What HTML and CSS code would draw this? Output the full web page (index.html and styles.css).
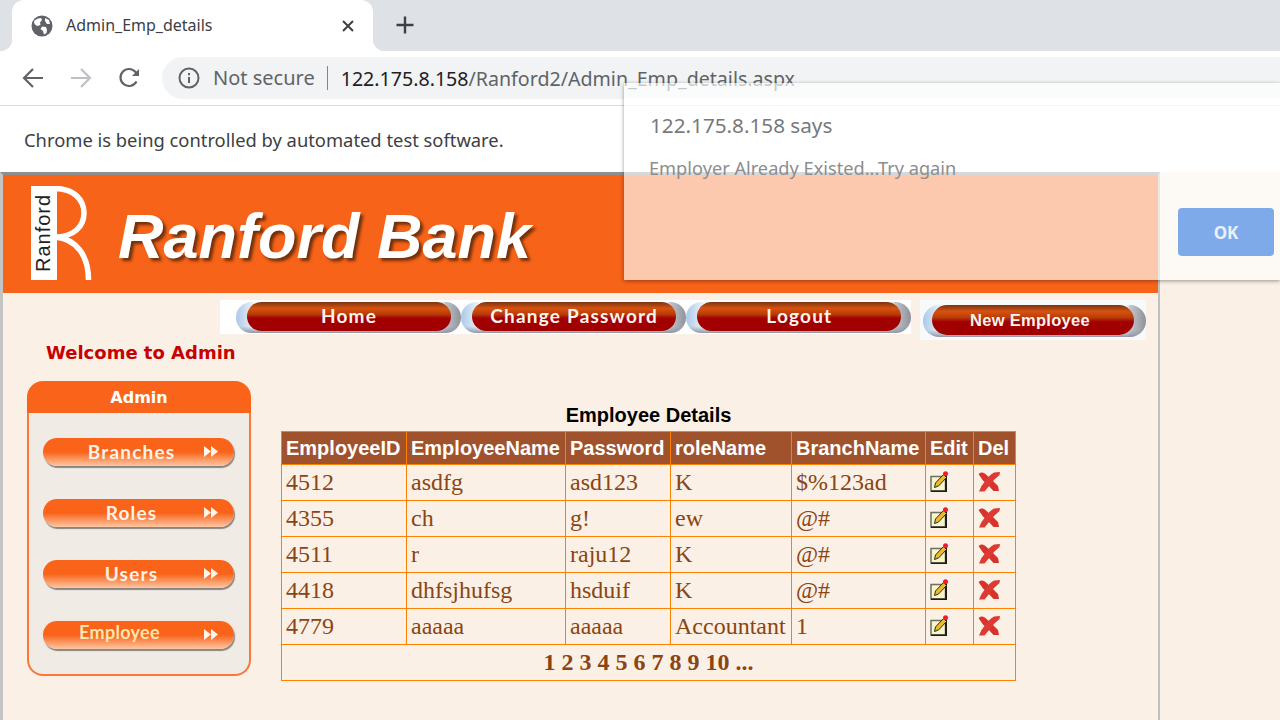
FILE: index.html
```html
<!DOCTYPE html>
<html lang="en">
<head>
    <meta charset="UTF-8">
    <title>Admin_Emp_details</title>
    <link rel="stylesheet" href="styles.css">
</head>
<body>
    <svg class="defs" width="0" height="0">
        <symbol id="edit" viewBox="0 0 18 21">
            <rect x="1" y="5.500" width="14.500" height="14.500" fill="#f8f6c4" stroke="#6d6d64" stroke-width="1.500"/>
            <path d="M16 5V20.500H1" fill="none" stroke="#1d1d1d" stroke-width="2"/>
            <path d="M4.500 16.500L5.500 12L13.500 3.500L16.500 6.500L8.500 15Z" fill="#f0b92a" stroke="#2a2a22" stroke-width="1"/>
            <circle cx="15.500" cy="2.800" r="2.500" fill="#ee1c2e"/>
        </symbol>
        <symbol id="del" viewBox="0 0 22 21">
            <path d="M0.500 3C3 0.500 6 1 8.500 4L13 8L20 15L21 20L15.500 20L10 14L5 9.500Z" fill="#d8322a"/>
            <path d="M22 1L16 1.500C13 3 10 6 8 9L3.500 15L1 20.500L6.500 20.500L11.500 14.500L16 9L21.500 4Z" fill="#dc3a32"/>
        </symbol>
        <symbol id="arrows" viewBox="0 0 14 11">
            <path d="M0 0L7 5.500L0 11ZM7 0L14 5.500L7 11Z" fill="#fff6ea"/>
        </symbol>
    </svg>

    <div class="tabstrip">
        <div class="tab">
            <svg class="globe" width="22" height="22" viewBox="0 0 22 22">
                <circle cx="11" cy="11" r="10.500" fill="#5f6368"/>
                <path d="M3 6C5 4 8 3 10 3L11 5L9 7.500L9.500 10L6 11L3.500 9ZM13 19.500L12 16L9.500 14L11 11.500L15 12L16 15L15.500 18ZM14 3L18 5L19 9L16 9L14 6Z" fill="#fff"/>
            </svg>
            <span class="tab-title">Admin_Emp_details</span>
            <svg class="tab-close" width="14" height="14" viewBox="0 0 14 14">
                <path d="M2 2L12 12M12 2L2 12" stroke="#3c4043" stroke-width="2"/>
            </svg>
        </div>
        <svg class="new-tab" width="20" height="20" viewBox="0 0 20 20">
            <path d="M10 1.500V18.500M1.500 10H18.500" stroke="#3c4043" stroke-width="2.400"/>
        </svg>
    </div>

    <div class="toolbar">
        <svg class="tool" width="24" height="24" viewBox="0 0 24 24">
            <path d="M22 12H4M12 3L3 12L12 21" fill="none" stroke="#5f6368" stroke-width="2.200"/>
        </svg>
        <svg class="tool" width="24" height="24" viewBox="0 0 24 24">
            <path d="M2 12H20M12 3L21 12L12 21" fill="none" stroke="#bdc1c6" stroke-width="2.200"/>
        </svg>
        <svg class="tool" width="24" height="24" viewBox="0 0 24 24">
            <path d="M19.500 15.500A8.500 8.500 0 1 1 18.500 6L21 8.500" fill="none" stroke="#5f6368" stroke-width="2.200"/>
            <path d="M22 3V10H15Z" fill="#5f6368"/>
        </svg>
        <div class="omnibox">
            <svg width="22" height="22" viewBox="0 0 22 22">
                <circle cx="11" cy="11" r="9.500" fill="none" stroke="#5f6368" stroke-width="2"/>
                <path d="M11 10V16M11 6V8.200" stroke="#5f6368" stroke-width="2"/>
            </svg>
            <span class="not-secure">Not secure</span>
            <span class="url"><span class="url-host">122.175.8.158</span>/Ranford2/Admin_Emp_details.aspx</span>
        </div>
    </div>

    <div class="infobar">Chrome is being controlled by automated test software.</div>

    <div class="page">
        <div class="banner">
            <svg class="logo" width="62" height="94" viewBox="0 0 62 94">
                <rect width="26" height="94" fill="#fff"/>
                <path d="M24 2.500C43 2.500 53 14 53 27C53 41 42 51 24 51C46 53 57.500 70 57.500 94" fill="none" stroke="#fff" stroke-width="5.500"/>
                <text class="logo-text" transform="translate(19 86) rotate(-90)">Ranford</text>
            </svg>
            <span class="bank-name">Ranford Bank</span>
        </div>

        <div class="nav-row">
            <div class="nav-strip">
                <a class="nav-btn"><span class="nav-pill">Home</span></a>
                <a class="nav-btn"><span class="nav-pill">Change Password</span></a>
                <a class="nav-btn"><span class="nav-pill">Logout</span></a>
            </div>
            <div class="new-strip">
                <a class="nav-btn new-btn"><span class="nav-pill">New Employee</span></a>
            </div>
        </div>

        <div class="content">
            <div class="left-col">
                <div class="welcome">Welcome to Admin</div>
                <div class="side-panel">
                    <div class="side-head">Admin</div>
                    <div class="side-body">
                        <a class="side-btn"><span class="side-label">Branches</span><svg class="side-arrows" width="14" height="11"><use href="#arrows"/></svg></a>
                        <a class="side-btn"><span class="side-label">Roles</span><svg class="side-arrows" width="14" height="11"><use href="#arrows"/></svg></a>
                        <a class="side-btn"><span class="side-label">Users</span><svg class="side-arrows" width="14" height="11"><use href="#arrows"/></svg></a>
                        <a class="side-btn side-btn-active"><span class="side-label">Employee</span><svg class="side-arrows" width="14" height="11"><use href="#arrows"/></svg></a>
                    </div>
                </div>
            </div>

            <div class="table-col">
                <div class="table-title">Employee Details</div>
                <table class="emp-table">
                    <tr>
                        <th class="c-id">EmployeeID</th>
                        <th class="c-name">EmployeeName</th>
                        <th class="c-pass">Password</th>
                        <th class="c-role">roleName</th>
                        <th class="c-branch">BranchName</th>
                        <th class="c-edit">Edit</th>
                        <th class="c-del">Del</th>
                    </tr>
                    <tr>
                        <td>4512</td><td>asdfg</td><td>asd123</td><td>K</td><td>$%123ad</td>
                        <td><svg class="ico-edit"><use href="#edit"/></svg></td>
                        <td><svg class="ico-del"><use href="#del"/></svg></td>
                    </tr>
                    <tr>
                        <td>4355</td><td>ch</td><td>g!</td><td>ew</td><td>@#</td>
                        <td><svg class="ico-edit"><use href="#edit"/></svg></td>
                        <td><svg class="ico-del"><use href="#del"/></svg></td>
                    </tr>
                    <tr>
                        <td>4511</td><td>r</td><td>raju12</td><td>K</td><td>@#</td>
                        <td><svg class="ico-edit"><use href="#edit"/></svg></td>
                        <td><svg class="ico-del"><use href="#del"/></svg></td>
                    </tr>
                    <tr>
                        <td>4418</td><td>dhfsjhufsg</td><td>hsduif</td><td>K</td><td>@#</td>
                        <td><svg class="ico-edit"><use href="#edit"/></svg></td>
                        <td><svg class="ico-del"><use href="#del"/></svg></td>
                    </tr>
                    <tr>
                        <td>4779</td><td>aaaaa</td><td>aaaaa</td><td>Accountant</td><td>1</td>
                        <td><svg class="ico-edit"><use href="#edit"/></svg></td>
                        <td><svg class="ico-del"><use href="#del"/></svg></td>
                    </tr>
                    <tr>
                        <td class="pager" colspan="7">1 2 3 4 5 6 7 8 9 10 ...</td>
                    </tr>
                </table>
            </div>
        </div>
    </div>

    <!-- alert is fading in, so it is still see-through -->
    <div class="dialog">
        <div class="dialog-title">122.175.8.158 says</div>
        <div class="dialog-text">Employer Already Existed...Try again</div>
        <div class="dialog-actions"><button class="ok-btn">OK</button></div>
    </div>
</body>
</html>
```

FILE: styles.css
```css
* {
    box-sizing: border-box;
}

body {
    margin: 0;
    height: 720px;
    overflow: hidden;
    position: relative;
    background: #faf0e6;
    font-family: "Noto Sans", "Open Sans", sans-serif;
}

.defs {
    position: absolute;
}

/* browser chrome */
.tabstrip {
    height: 51px;
    background: #dee1e6;
    display: flex;
    align-items: flex-end;
    padding-left: 12px;
}

.tab {
    width: 361px;
    height: 51px;
    background: #fff;
    border-radius: 12px 12px 0 0;
    display: flex;
    align-items: center;
    padding: 0 18px 0 19px;
    position: relative;
}

.tab::before,
.tab::after {
    content: "";
    position: absolute;
    bottom: 0;
    width: 12px;
    height: 12px;
}

.tab::before {
    left: -12px;
    background: radial-gradient(circle at 0 0, #dee1e6 12px, #fff 12.5px);
}

.tab::after {
    right: -12px;
    background: radial-gradient(circle at 100% 0, #dee1e6 12px, #fff 12.5px);
}

.tab-title {
    margin: -2px 0 0 13px;
    flex: 1;
    font-size: 16px;
    color: #3c4043;
}

.new-tab {
    margin: 0 0 16px 22px;
}

.toolbar {
    height: 55px;
    background: #fff;
    border-bottom: 1px solid #dadce0;
    display: flex;
    align-items: center;
    padding-left: 21px;
    gap: 24px;
}

.omnibox {
    flex: 1;
    height: 42px;
    margin-left: -3px;
    background: #f1f3f4;
    border-radius: 21px 0 0 21px;
    display: flex;
    align-items: center;
    padding-left: 16px;
}

.not-secure {
    margin-left: 13px;
    padding-right: 12px;
    border-right: 1px solid #80868b;
    font-size: 20px;
    line-height: 24px;
    color: #5f6368;
}

.url {
    margin-left: 13px;
    font-size: 19.600px;
    color: #5f6368;
    white-space: nowrap;
}

.url-host {
    color: #202124;
}

.infobar {
    height: 66px;
    background: #fff;
    padding-left: 24px;
    font-size: 18.350px;
    line-height: 68px;
    color: #3c4043;
}

/* page */
.page {
    width: 1160px;
    height: 548px;
    border-top: 3px solid #8f8f8f;
    border-left: 3px solid #c4c4c4;
    border-right: 2px solid #c0c0c0;
}

.banner {
    height: 118px;
    background: #f76318;
    display: flex;
    align-items: center;
    padding: 0 0 2px 28px;
    gap: 25px;
}

.logo-text {
    font-family: "Liberation Sans", sans-serif;
    font-size: 20px;
    letter-spacing: 1px;
    fill: #222;
}

.bank-name {
    margin-top: 6px;
    font-family: "Liberation Sans", sans-serif;
    font-weight: bold;
    font-style: italic;
    font-size: 63px;
    color: #fff;
    text-shadow: 3px 3px 3px #71300c;
    white-space: nowrap;
}

.nav-row {
    display: flex;
    align-items: flex-start;
    padding: 7px 0 0 217px;
    gap: 9px;
}

.nav-strip {
    width: 691px;
    height: 34px;
    background: #fff;
    display: flex;
    padding-left: 16px;
    gap: 0.500px;
}

.new-strip {
    width: 226px;
    height: 40px;
    background: #f8f9fb;
    padding-left: 3px;
}

.nav-btn {
    display: block;
    width: 226px;
    height: 31px;
    margin-top: 2px;
    padding-left: 11px;
    border-radius: 16px;
    background: linear-gradient(180deg, transparent 78%, #8f95a3 100%), linear-gradient(90deg, #a9c9ea, #e8eef5 7%, #fff 9%, #fff 91%, #c0c4cc 93%, #8f9299);
}

.nav-pill {
    display: block;
    width: 204px;
    height: 29px;
    border-radius: 15px;
    background: linear-gradient(180deg, #7a3412 0, #d8520f 22%, #b83c08 42%, #a30000 56%, #a00000 100%);
    font-family: "Lato", sans-serif;
    font-weight: bold;
    font-size: 19px;
    letter-spacing: 1.200px;
    line-height: 27px;
    text-align: center;
    color: #fbf3ec;
}

.new-btn {
    width: 223px;
    height: 32px;
    margin-top: 5px;
    padding-left: 9px;
}

.new-btn .nav-pill {
    width: 202px;
    height: 30px;
    font-family: "Liberation Sans", sans-serif;
    font-size: 16.500px;
    letter-spacing: 0.300px;
    line-height: 30px;
    padding-right: 6px;
}

.content {
    display: flex;
    align-items: flex-start;
}

.left-col {
    width: 248px;
    padding-left: 24px;
}

.welcome {
    margin: 2px 0 17px 19px;
    height: 22px;
    font-family: "DejaVu Sans", sans-serif;
    font-weight: bold;
    font-size: 18px;
    line-height: 22px;
    color: #c80000;
    white-space: nowrap;
}

.side-panel {
    width: 224px;
    height: 295px;
}

.side-head {
    height: 32px;
    background: #f9641a;
    border-radius: 16px 16px 0 0;
    font-family: "DejaVu Sans", sans-serif;
    font-weight: bold;
    font-size: 16px;
    line-height: 34px;
    text-align: center;
    color: #fff;
}

.side-body {
    height: 263px;
    background: #f0ebe5;
    border: 2px solid #f9783a;
    border-top: none;
    border-radius: 0 0 16px 16px;
    padding: 25px 0 0 14px;
    display: flex;
    flex-direction: column;
    gap: 33px;
}

.side-btn {
    width: 191px;
    height: 28px;
    border-radius: 14px;
    background: linear-gradient(180deg, #f9641a 0, #f9641a 50%, #fdc6a3 100%);
    box-shadow: 1px 2px 1px #8a8480;
    display: flex;
    align-items: center;
    position: relative;
    font-family: "Lato", sans-serif;
    font-weight: bold;
    font-size: 19px;
    color: #fdf2e6;
}

.side-label {
    flex: 1;
    text-align: center;
    letter-spacing: 1.200px;
    margin-top: -2px;
    padding-right: 14px;
}

.side-arrows {
    position: absolute;
    right: 16px;
    top: 8px;
}

.side-btn-active {
    font-size: 18px;
    color: #fbe6ae;
    box-shadow: 1px 2px 1px #8a8480, 0 0 3px #f5dcd0;
}

.side-btn-active .side-label {
    margin-top: -6px;
    letter-spacing: 0.300px;
    padding-right: 38px;
}

.table-col {
    margin-left: 30px;
    padding-top: 62px;
}

.table-title {
    height: 29px;
    font-family: "Liberation Sans", sans-serif;
    font-weight: bold;
    font-size: 20px;
    line-height: 26px;
    text-align: center;
    color: #000;
}

.emp-table {
    border-collapse: collapse;
    table-layout: fixed;
    width: 734px;
    font-family: "Liberation Serif", serif;
    font-size: 24px;
    color: #8b4513;
}

.emp-table th,
.emp-table td {
    border: 1px solid #ff8000;
    padding: 0 4px;
    height: 36px;
    text-align: left;
    white-space: nowrap;
}

.emp-table th {
    height: 33px;
    background: #a0522d;
    font-family: "Liberation Sans", sans-serif;
    font-weight: bold;
    font-size: 20px;
    color: #fff;
}

.c-id { width: 125px; }
.c-name { width: 159px; }
.c-pass { width: 105px; }
.c-role { width: 121px; }
.c-branch { width: 134px; }
.c-edit { width: 48px; }
.c-del { width: 42px; }

.ico-edit {
    display: block;
    width: 18px;
    height: 21px;
    margin-top: -3px;
}

.ico-del {
    display: block;
    width: 22px;
    height: 21px;
    margin-top: -3px;
}

.emp-table .pager {
    text-align: center;
    font-weight: bold;
}

/* alert */
.dialog {
    position: absolute;
    left: 624px;
    top: 83px;
    width: 656px;
    height: 197px;
    padding: 28px 6px 0 25px;
    background: rgba(255, 255, 255, 0.65);
    box-shadow: 0 1px 4px rgba(0, 0, 0, 0.4);
}

.dialog-title {
    padding-left: 1px;
    font-size: 20.700px;
    line-height: 28px;
    color: #77797c;
}

.dialog-text {
    margin-top: 16px;
    font-size: 18.200px;
    line-height: 26px;
    color: #8d8d8d;
}

.dialog-actions {
    display: flex;
    justify-content: flex-end;
    margin-top: 27px;
}

.ok-btn {
    width: 96px;
    height: 48px;
    border: none;
    border-radius: 4px;
    background: #7faaea;
    font-family: "Noto Sans", sans-serif;
    font-weight: bold;
    font-size: 17px;
    color: #e8f0fb;
}
```
